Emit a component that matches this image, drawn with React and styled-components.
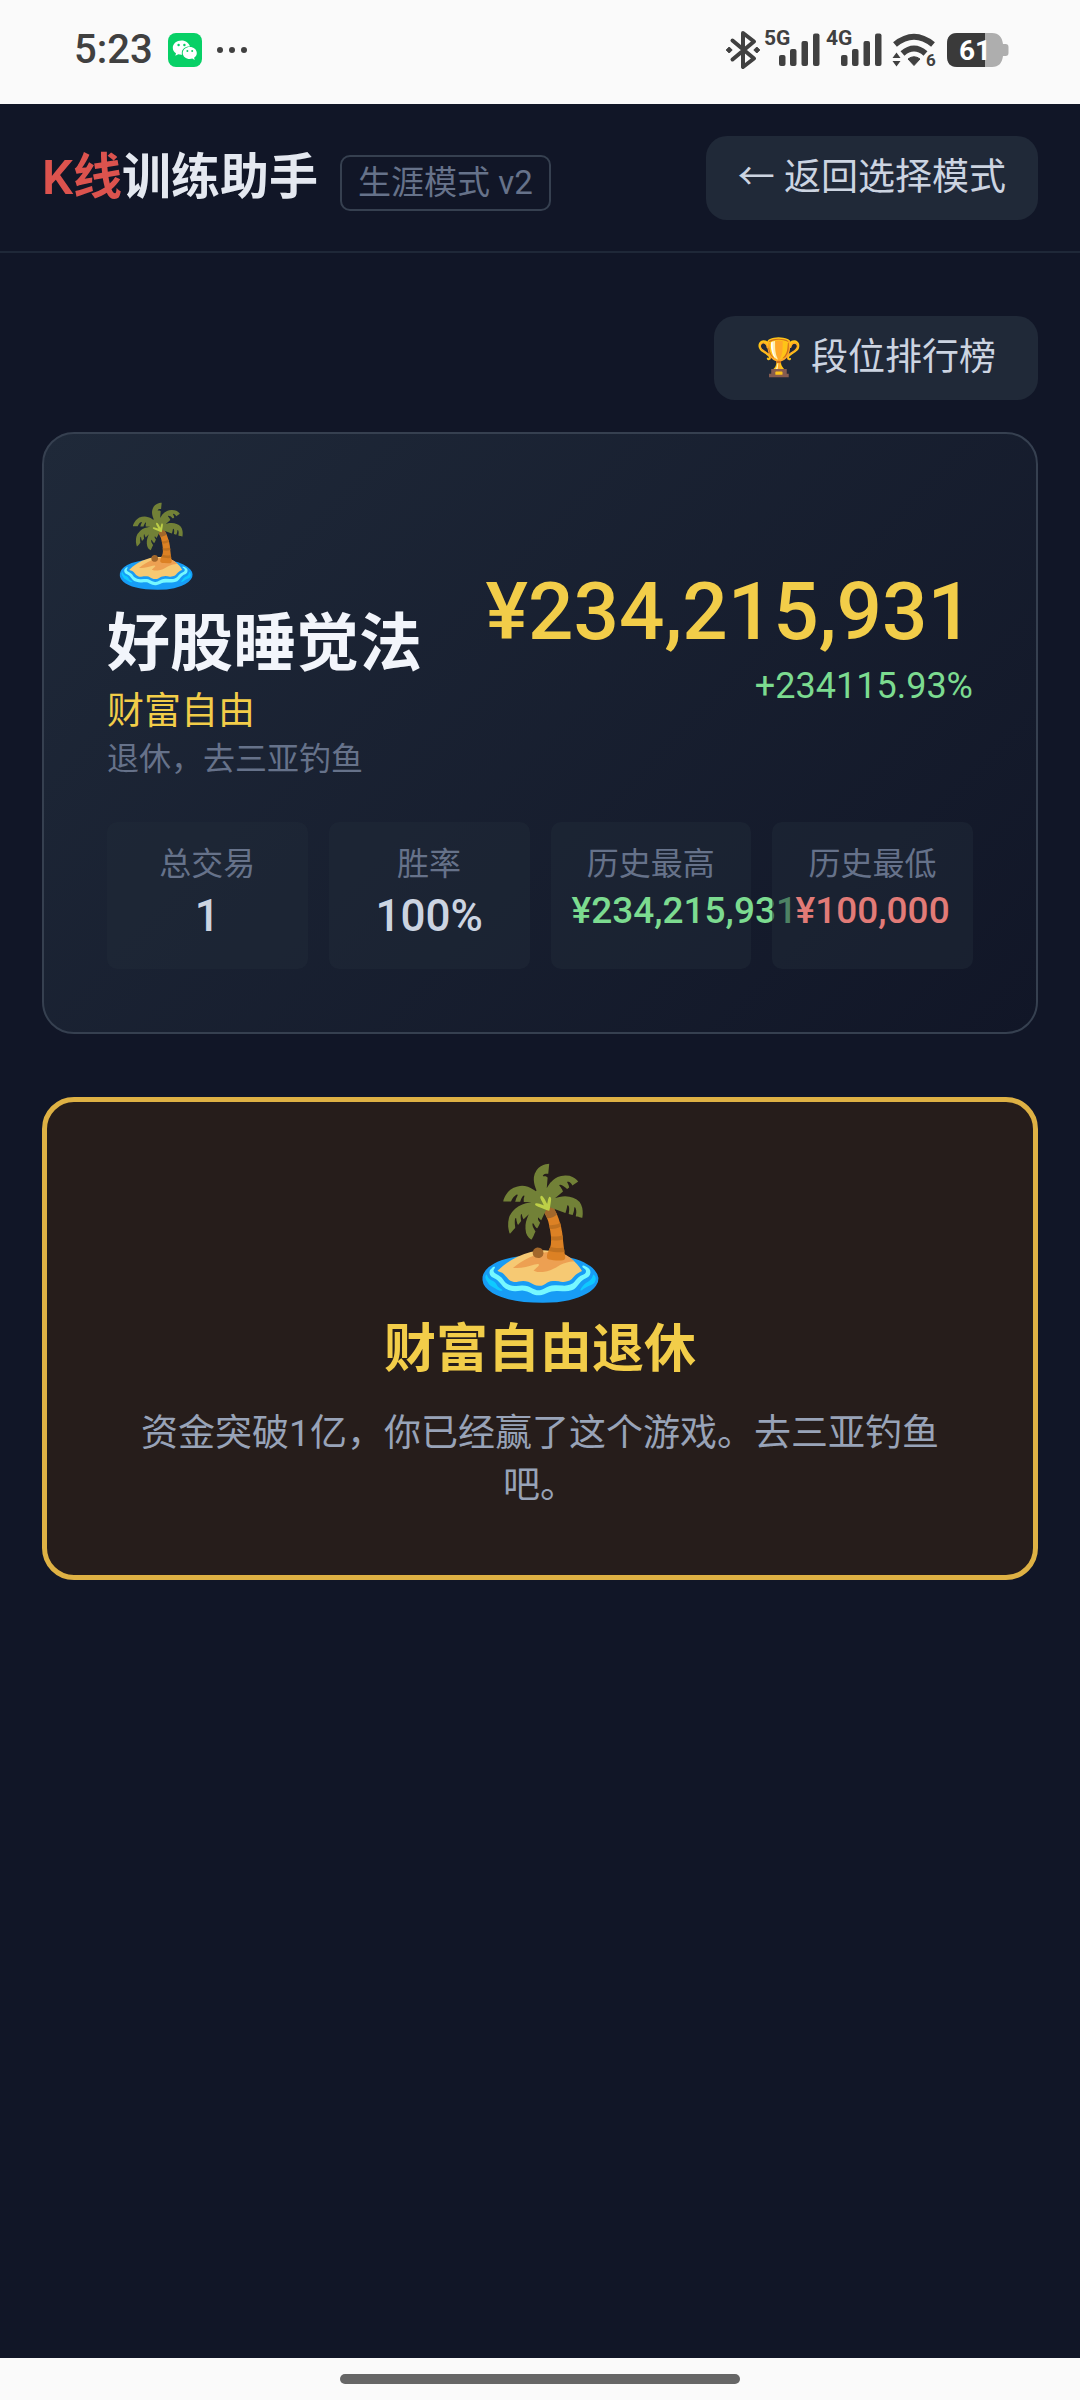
import React from 'react';
import styled, { createGlobalStyle } from 'styled-components';

// ========================================================================
// --- STYLED COMPONENTS ---
// ========================================================================

const GlobalStyle = createGlobalStyle`
  * { box-sizing: border-box; }
  body {
    margin: 0;
    background-color: #111627;
    font-family: Roboto, 'Noto Sans CJK SC', sans-serif;
  }
`;

const Page = styled.div`
  display: flex;
  flex-direction: column;
  min-height: 100vh;
  color: #e4e8f0;
`;

// --- STATUS BAR ---
const StatusBar = styled.div`
  display: flex;
  align-items: center;
  justify-content: space-between;
  height: 104px;
  padding: 0 71px 4px 74px;
  background-color: #fafafa;
  color: #404040;
`;

const StatusGroup = styled.div`
  display: flex;
  align-items: center;
  gap: ${props => props.$gap}px;
`;

const Clock = styled.span`
  font-size: 40px;
  line-height: 48px;
  font-weight: 500;
`;

const StatusSvg = styled.svg`
  display: block;
  overflow: visible;
  font-weight: 700;
`;

// --- HEADER ---
const Header = styled.header`
  display: flex;
  align-items: center;
  justify-content: space-between;
  padding: 32px 42px 31px;
  border-bottom: 2px solid #1f2838;
`;

const Brand = styled.div`
  display: flex;
  align-items: baseline;
  gap: 22px;
`;

const Title = styled.h1`
  margin: 0;
  font-size: 49px;
  line-height: 74px;
  font-weight: 600;
`;

const Accent = styled.span`
  color: #dc534e;
`;

const Badge = styled.span`
  padding: 5px 16px;
  border: 2px solid #364050;
  border-radius: 10px;
  font-size: 33px;
  line-height: 42px;
  color: #66728a;
`;

const Button = styled.button`
  padding: 16px ${props => (props.$wide ? 42 : 32)}px;
  border: none;
  border-radius: 21px;
  background-color: #202938;
  color: #ccd4e1;
  font-family: inherit;
  font-size: 37px;
  line-height: 52px;
  cursor: pointer;
`;

// --- MAIN ---
const Main = styled.main`
  flex: 1;
  padding: 63px 42px;
`;

const Toolbar = styled.div`
  display: flex;
  justify-content: flex-end;
  margin-bottom: 32px;
`;

const ProfileCard = styled.section`
  padding: 63px;
  margin-bottom: 63px;
  border: 2px solid #364050;
  border-radius: 32px;
  background: linear-gradient(135deg, #1f2939, #111627);
`;

const ProfileTop = styled.div`
  display: flex;
  align-items: center;
  justify-content: space-between;
  margin-bottom: 42px;
`;

const RankIcon = styled.div`
  margin-bottom: 6px;
  font-size: 79px;
  line-height: 99px;
`;

const Name = styled.h2`
  margin: 0;
  font-size: 63px;
  line-height: 84px;
  font-weight: 600;
  color: #f2f5fb;
`;

const Rank = styled.p`
  margin: 0;
  font-size: 37px;
  line-height: 52px;
  color: #f2cd49;
`;

const Note = styled.p`
  margin: 0;
  font-size: 32px;
  line-height: 42px;
  color: #66728a;
`;

const Balance = styled.div`
  text-align: right;
`;

const Amount = styled.div`
  font-size: 80px;
  line-height: 95px;
  font-weight: 500;
  color: #f2cd49;
`;

const Change = styled.div`
  font-size: 36px;
  line-height: 52px;
  color: #7cdb90;
`;

// --- STATS ---
const Stats = styled.dl`
  display: grid;
  grid-template-columns: repeat(4, minmax(0, 1fr));
  gap: 21px;
  margin: 0;
`;

const Stat = styled.div`
  isolation: isolate;
  padding: 21px;
  border-radius: 10px;
  background-color: rgba(31, 42, 56, 0.5);
  text-align: center;
`;

const StatLabel = styled.dt`
  font-size: 32px;
  line-height: 42px;
  color: #66728a;
`;

const StatValue = styled.dd`
  margin: 0;
  font-size: ${props => (props.$small ? 37 : 44)}px;
  line-height: ${props => (props.$small ? 52 : 63)}px;
  font-weight: 500;
  color: ${props => props.$color};
`;

// --- RETIREMENT CARD ---
const RetireCard = styled.section`
  padding: 63px;
  border: 5px solid #deb144;
  border-radius: 32px;
  background-color: #261d1b;
  text-align: center;
`;

const RetireIcon = styled.div`
  margin-bottom: 12px;
  font-size: 126px;
  line-height: 136px;
`;

const RetireTitle = styled.h2`
  margin: 0 0 21px;
  font-size: 52px;
  line-height: 74px;
  font-weight: 600;
  color: #f2cd49;
`;

const RetireText = styled.p`
  margin: 0;
  font-size: 37px;
  line-height: 52px;
  color: #98a3b8;
`;

// --- GESTURE BAR ---
const GestureBar = styled.div`
  display: flex;
  justify-content: center;
  padding: 16px 0;
  background-color: #fafafa;
`;

const GestureHandle = styled.div`
  width: 37%;
  height: 10px;
  border-radius: 5px;
  background-color: #666;
`;

// ========================================================================
// --- ICONS ---
// ========================================================================

const WeChatIcon = () => (
  <StatusSvg width="34" height="34" viewBox="0 0 34 34">
    <rect width="34" height="34" rx="8" fill="#07d066" />
    <path d="M13.5 7.5c-4.9 0-8.7 3.2-8.7 7.2 0 2.3 1.2 4.2 3.2 5.5l-.7 2.6 3-1.5c1 .3 2 .5 3.2.5h.6a6.2 6.2 0 0 1-.3-1.8c0-3.7 3.5-6.4 7.6-6.4h.6c-.8-3.5-4.3-6.1-8.5-6.1z" fill="#fff" />
    <path d="M28.8 20c0-3.4-3.2-6-7-6s-7.1 2.6-7.1 6 3.3 6 7.1 6c.9 0 1.7-.1 2.5-.4l2.4 1.3-.6-2.2c1.7-1.1 2.7-2.8 2.7-4.7z" fill="#fff" />
    <g fill="#07d066">
      <circle cx="10.6" cy="12" r="1.2" />
      <circle cx="16.4" cy="12" r="1.2" />
      <circle cx="19.4" cy="18" r="1" />
      <circle cx="24.2" cy="18" r="1" />
    </g>
  </StatusSvg>
);

const MoreIcon = () => (
  <StatusSvg width="30" height="8" viewBox="0 0 30 8" fill="#404040">
    <circle cx="3" cy="4" r="3" />
    <circle cx="15" cy="4" r="3" />
    <circle cx="27" cy="4" r="3" />
  </StatusSvg>
);

const BluetoothIcon = () => (
  <StatusSvg width="34" height="54" viewBox="-2 -8 34 54">
    <path d="M6.5 9.5 28 27.5 17 36V2l11 8.5L6.5 28.5" fill="none" stroke="#404040" strokeWidth="4" strokeLinejoin="round" strokeLinecap="round" />
    <path d="M3.2 16 6.2 19l-3 3-3-3zM30.8 16l3 3-3 3-3-3z" fill="#404040" stroke="#404040" strokeLinejoin="round" />
  </StatusSvg>
);

const SignalIcon = ({ label }) => (
  <StatusSvg width="55" height="54" viewBox="0 -8 55 54" fill="#404040">
    <text x="-1" y="14" fontSize="21">{label}</text>
    <rect x="14" y="24" width="6.5" height="11" rx="2" />
    <rect x="25" y="18" width="6.5" height="17" rx="2" />
    <rect x="36.5" y="10" width="6.5" height="25" rx="2" />
    <rect x="48" y="2.5" width="6.5" height="32.5" rx="2" />
  </StatusSvg>
);

const WifiIcon = () => (
  <StatusSvg width="51" height="54" viewBox="-3 -8 51 54" fill="#404040">
    <path d="M3 13.5Q22 -2 41 13.5" fill="none" stroke="#404040" strokeWidth="6" />
    <path d="M10.5 22.5Q22 12.5 33.5 22.5" fill="none" stroke="#404040" strokeWidth="6" />
    <path d="M16 28Q22 23.5 28 28L22 34.5z" stroke="#404040" strokeLinejoin="round" />
    <path d="M.5 27 4.5 21.5l4 5.5zM.5 30h8L4.5 35.5z" />
    <text x="34" y="35" fontSize="17">6</text>
  </StatusSvg>
);

const BatteryIcon = () => (
  <StatusSvg width="62" height="54" viewBox="0 -10 62 54">
    <path d="M10 0h35c7 0 10 4 11 11h2.5c2 0 3 1 3 3v6c0 2-1 3-3 3H56c-1 7-4 11-11 11H10C3 34 0 30 0 23V11C0 4 3 0 10 0z" fill="#aeaeae" />
    <path d="M10 0h28v34H10C3 34 0 30 0 23V11C0 4 3 0 10 0z" fill="#3a3a3a" />
    <text x="12" y="27" fontSize="28" fill="#fff">61</text>
  </StatusSvg>
);

// ========================================================================
// --- DATA ---
// ========================================================================

const stats = [
  { label: '总交易', value: '1', color: '#ccd4e1' },
  { label: '胜率', value: '100%', color: '#ccd4e1' },
  { label: '历史最高', value: '¥234,215,931', color: '#7cdb90', small: true },
  { label: '历史最低', value: '¥100,000', color: '#e27b77', small: true },
];

export default function App() {
  return (
    <Page>
      <GlobalStyle />

      <StatusBar>
        <StatusGroup $gap={15}>
          <Clock>5:23</Clock>
          <WeChatIcon />
          <MoreIcon />
        </StatusGroup>
        <StatusGroup $gap={7}>
          <BluetoothIcon />
          <SignalIcon label="5G" />
          <SignalIcon label="4G" />
          <WifiIcon />
          <BatteryIcon />
        </StatusGroup>
      </StatusBar>

      <Header>
        <Brand>
          <Title><Accent>K线</Accent>训练助手</Title>
          <Badge>生涯模式 v2</Badge>
        </Brand>
        <Button type="button">← 返回选择模式</Button>
      </Header>

      <Main>
        <Toolbar>
          <Button type="button" $wide>🏆 段位排行榜</Button>
        </Toolbar>

        <ProfileCard>
          <ProfileTop>
            <div>
              <RankIcon>🏝️</RankIcon>
              <Name>好股睡觉法</Name>
              <Rank>财富自由</Rank>
              <Note>退休，去三亚钓鱼</Note>
            </div>
            <Balance>
              <Amount>¥234,215,931</Amount>
              <Change>+234115.93%</Change>
            </Balance>
          </ProfileTop>
          <Stats>
            {stats.map(stat => (
              <Stat key={stat.label}>
                <StatLabel>{stat.label}</StatLabel>
                <StatValue $color={stat.color} $small={stat.small}>{stat.value}</StatValue>
              </Stat>
            ))}
          </Stats>
        </ProfileCard>

        <RetireCard>
          <RetireIcon>🏝️</RetireIcon>
          <RetireTitle>财富自由退休</RetireTitle>
          <RetireText>资金突破1亿，你已经赢了这个游戏。去三亚钓鱼吧。</RetireText>
        </RetireCard>
      </Main>

      <GestureBar>
        <GestureHandle />
      </GestureBar>
    </Page>
  );
}
